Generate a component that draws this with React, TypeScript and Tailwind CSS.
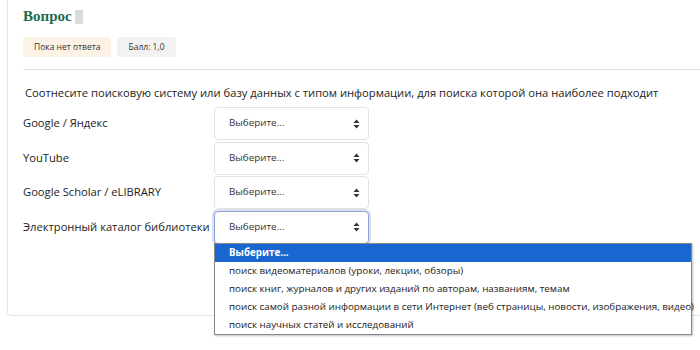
const rows = [
  'Google / Яндекс',
  'YouTube',
  'Google Scholar / eLIBRARY',
  'Электронный каталог библиотеки',
];

const options = [
  'Выберите...',
  'поиск видеоматериалов (уроки, лекции, обзоры)',
  'поиск книг, журналов и других изданий по авторам, названиям, темам',
  'поиск самой разной информации в сети Интернет (веб страницы, новости, изображения, видео)',
  'поиск научных статей и исследований',
];

function Arrows() {
  return (
    <svg width="7" height="10" viewBox="0 0 7 10" className="text-[#333]">
      <path d="M3.5 0.5 L6.5 4 H0.5 Z" fill="currentColor" />
      <path d="M3.5 9.5 L6.5 6 H0.5 Z" fill="currentColor" />
    </svg>
  );
}

function SelectBox({ focused }: { focused?: boolean }) {
  return (
    <div
      className={
        'relative flex h-[33px] w-[155px] items-center justify-between rounded-[4px] border bg-white pl-[14px] pr-[8px] text-[9.8px] text-[#333] ' +
        (focused ? 'border-[#8aa4d6] shadow-[0_0_0_2px_rgba(150,170,210,0.35)]' : 'border-[#e2e2e2]')
      }
    >
      <span>Выберите...</span>
      <Arrows />
    </div>
  );
}

export default function App() {
  return (
    <div className="h-[350px] w-[700px] overflow-hidden bg-white" style={{ fontFamily: '"Open Sans", sans-serif' }}>
      <div className="relative ml-[7px] h-[316px] w-[720px] rounded-bl-[4px] border-b border-l border-[#e3e3e3] bg-white">
        <div className="pl-[15px] pt-[5px]">
          <div className="flex h-[22px] items-center gap-[3px]">
            <h3
              className="text-[15px] font-bold text-[#1d6a4a]"
              style={{ fontFamily: '"Liberation Serif", serif' }}
            >
              Вопрос
            </h3>
            <span className="mt-[1px] h-[14px] w-[8px] bg-[#d8dcdb]" />
          </div>
          <div className="mt-[10px] flex gap-[6px] text-[8.5px] text-[#333]">
            <span className="flex h-[20px] items-center rounded-[3px] bg-[#fcf2e6] px-[11px]">Пока нет ответа</span>
            <span className="flex h-[20px] items-center rounded-[3px] bg-[#f2f2f2] px-[11px]">Балл: 1,0</span>
          </div>
          <div className="mt-[12px] h-px bg-[#dedede]" />
          <p className="mt-[15px] pl-[2px] text-[11.2px] leading-[16px] text-[#1d1d1d]">
            Соотнесите поисковую систему или базу данных с типом информации, для поиска которой она наиболее подходит
          </p>
          <div className="mt-[6px] flex flex-col gap-[1.5px]">
            {rows.map((r, i) => (
              <div key={r} className="flex items-center">
                <span className="w-[191px] whitespace-nowrap text-[11.2px] text-[#1d1d1d]">{r}</span>
                <SelectBox focused={i === 3} />
              </div>
            ))}
          </div>
        </div>
        <div className="absolute left-[206px] top-[243px] w-[478px] border border-[#888] bg-white text-[9.8px] text-[#222] shadow-[1px_1px_2px_rgba(0,0,0,0.25)]">
          {options.map((o, i) => (
            <div
              key={o}
              className={
                'flex h-[18px] items-center whitespace-nowrap pl-[14px] ' +
                (i === 0 ? 'bg-[#1a66d1] font-bold text-white' : '')
              }
            >
              {o}
            </div>
          ))}
        </div>
      </div>
    </div>
  );
}
